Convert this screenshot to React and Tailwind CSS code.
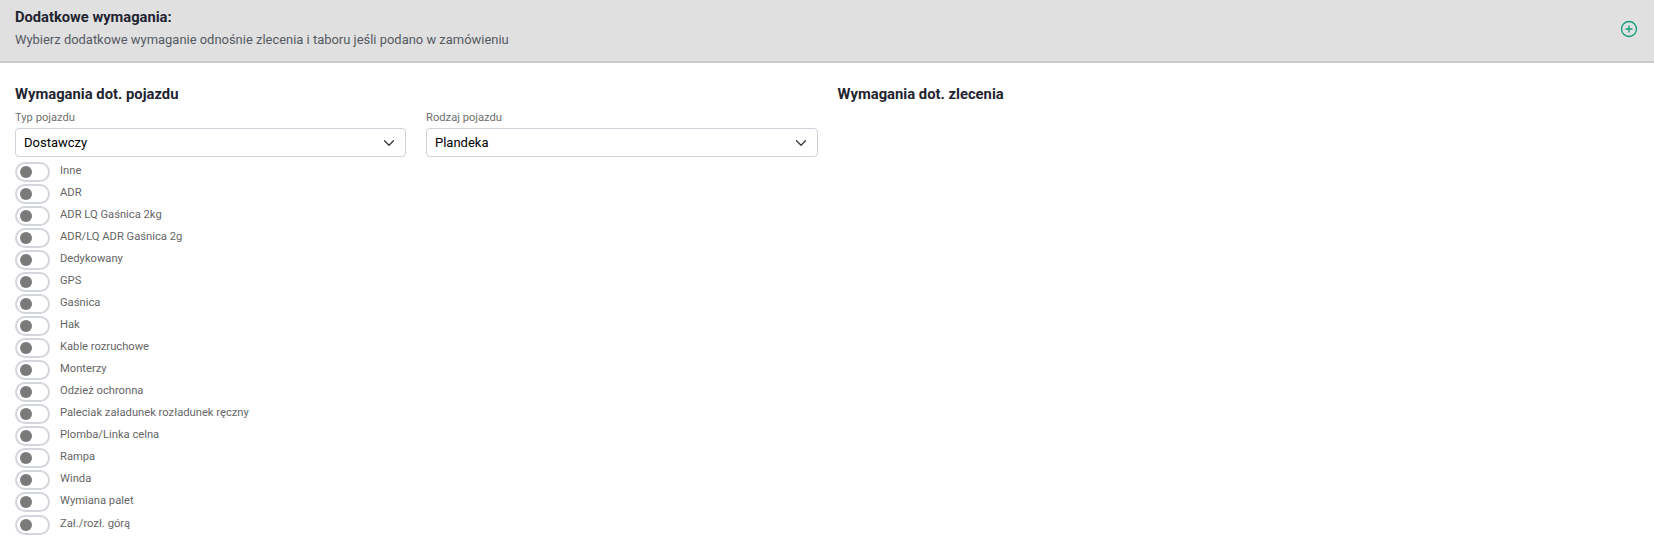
import { ChevronDown, CirclePlus } from "lucide-react";

const options = [
  "Inne",
  "ADR",
  "ADR LQ Gaśnica 2kg",
  "ADR/LQ ADR Gaśnica 2g",
  "Dedykowany",
  "GPS",
  "Gaśnica",
  "Hak",
  "Kable rozruchowe",
  "Monterzy",
  "Odzież ochronna",
  "Paleciak załadunek rozładunek ręczny",
  "Plomba/Linka celna",
  "Rampa",
  "Winda",
  "Wymiana palet",
  "Zał./rozł. górą",
];

function Select({ label, value }) {
  return (
    <div>
      <div className="h-[20px] text-[11.2px] leading-[20px] text-[#6f6f6f]">{label}</div>
      <div className="flex h-[29px] items-center justify-between rounded-[4px] border border-[#cfd2da] bg-white pl-[8px] pr-[7px] text-[13px] text-black">
        <span>{value}</span>
        <ChevronDown size={18} strokeWidth={1.6} className="text-[#333]" />
      </div>
    </div>
  );
}

function Toggle({ label }) {
  return (
    <div className="flex h-[22px] items-start last:mt-[1px]">
      <div className="flex h-[20px] w-[35px] items-center rounded-full border-2 border-[#d2d5dc] bg-white pl-[3px]">
        <div className="h-[12px] w-[12px] rounded-full bg-[#7a7a7a]" />
      </div>
      <span className="ml-[10px] text-[11.2px] leading-[18px] text-[#666]">{label}</span>
    </div>
  );
}

export default function App() {
  return (
    <div className="h-[536px] overflow-hidden bg-white font-['Roboto',sans-serif]">
      <div className="flex h-[63px] items-center justify-between border-b-2 border-[#c9c9c9] bg-[#e0e0e0] pl-[15px] pr-[16px]">
        <div className="-mt-[5px]">
          <h2 className="text-[14.7px] font-bold leading-[20px] text-[#1f2430]">Dodatkowe wymagania:</h2>
          <p className="mt-[3px] text-[12.95px] leading-[20px] text-[#555a62]">
            Wybierz dodatkowe wymaganie odnośnie zlecenia i taboru jeśli podano w zamówieniu
          </p>
        </div>
        <CirclePlus size={18} strokeWidth={1.7} className="-mt-[3px] text-[#0f9d78]" />
      </div>

      <div className="flex pl-[15px] pt-[21px]">
        <div className="w-[803px]">
          <h3 className="text-[14.8px] font-bold leading-[20px] text-[#1f2430]">Wymagania dot. pojazdu</h3>
          <div className="mt-[4px] grid grid-cols-[391px_392px] gap-[20px]">
            <Select label="Typ pojazdu" value="Dostawczy" />
            <Select label="Rodzaj pojazdu" value="Plandeka" />
          </div>
          <div className="mt-[5px]">
            {options.map((o) => (
              <Toggle key={o} label={o} />
            ))}
          </div>
        </div>
        <div className="ml-[19.5px]">
          <h3 className="text-[14.8px] font-bold leading-[20px] text-[#1f2430]">Wymagania dot. zlecenia</h3>
        </div>
      </div>
    </div>
  );
}
